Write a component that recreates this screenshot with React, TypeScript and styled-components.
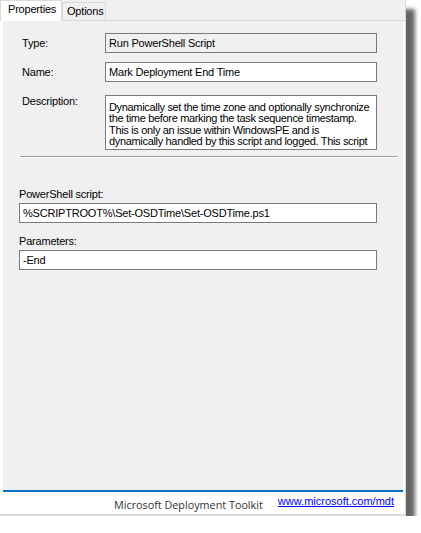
import React from "react";
import styled, { createGlobalStyle } from "styled-components";

const Global = createGlobalStyle`
  html, body { margin: 0; padding: 0; background: #ffffff; }
  body { font-family: "Liberation Sans", Arial, sans-serif; letter-spacing: -0.2px; }
`;

const Window = styled.div`
  width: 405px;
  height: 514px;
  display: flex;
  flex-direction: column;
  background: #f0f0f0;
  border-right: 1px solid #d6d6d6;
  border-bottom: 2px solid #d9d9d9;
  box-shadow: 9px 9px 4px rgba(0, 0, 0, 0.6);
  box-sizing: content-box;
`;

const TabBar = styled.div`
  height: 20px;
  display: flex;
  align-items: flex-end;
  background: #f0f0f0;
`;

const Tab = styled.div<{ $active?: boolean }>`
  box-sizing: border-box;
  height: ${(p) => (p.$active ? "21px" : "18px")};
  margin-bottom: ${(p) => (p.$active ? "-1px" : "0")};
  width: ${(p) => (p.$active ? "62px" : "44px")};
  padding-left: ${(p) => (p.$active ? "7px" : "4px")};
  padding-top: 2px;
  background: ${(p) => (p.$active ? "#ffffff" : "#f0f0f0")};
  border: 1px solid #d9d9d9;
  border-bottom: none;
  font-size: 11px;
  color: #000;
  position: relative;
  z-index: ${(p) => (p.$active ? 1 : 0)};
`;

const Body = styled.div`
  flex: 1;
  display: flex;
  flex-direction: column;
  background: #ffffff;
  padding: 0 2px 0 3px;
  border-top: 1px solid #d9d9d9;
`;

const Page = styled.div`
  flex: 1;
  background: #f0f0f0;
  padding: 12px 0 0 16px;
  display: flex;
  flex-direction: column;
`;

const Grid = styled.div`
  display: grid;
  grid-template-columns: 83px 272px;
  row-gap: 9px;
  padding-left: 3px;
`;

const Label = styled.div<{ $top?: boolean }>`
  font-size: 11px;
  color: #000;
  align-self: ${(p) => (p.$top ? "start" : "center")};
  padding-top: ${(p) => (p.$top ? "4px" : "0")};
`;

const Field = styled.div<{ $disabled?: boolean; $wide?: boolean }>`
  box-sizing: border-box;
  height: 20px;
  width: ${(p) => (p.$wide ? "358px" : "272px")};
  border: 1px solid #7a7a7a;
  background: ${(p) => (p.$disabled ? "#f0f0f0" : "#ffffff")};
  font-size: 11px;
  line-height: 18px;
  padding-left: 3px;
  color: #000;
  white-space: nowrap;
  overflow: hidden;
`;

const TextArea = styled.div`
  box-sizing: border-box;
  height: 55px;
  width: 272px;
  margin-top: 4px;
  border: 1px solid #7a7a7a;
  background: #ffffff;
  font-size: 11px;
  letter-spacing: -0.33px;
  line-height: 11.4px;
  padding: 6px 0 0 3px;
  color: #000;
  white-space: nowrap;
  overflow: hidden;
`;

const Separator = styled.div`
  height: 0;
  margin: 6px 5px 0 1px;
  border-top: 1px solid #a0a0a0;
  border-bottom: 1px solid #ffffff;
`;

const Section = styled.div`
  display: flex;
  flex-direction: column;
  margin-top: 30px;
`;

const SmallLabel = styled.div<{ $gap?: number }>`
  font-size: 11px;
  color: #000;
  margin-top: ${(p) => p.$gap ?? 0}px;
  margin-bottom: 3px;
`;

const Footer = styled.div`
  height: 22px;
  border-top: 2px solid #0072c6;
  background: #ffffff;
  display: flex;
  align-items: center;
  justify-content: flex-end;
  padding-right: 9px;
  gap: 15px;
`;

const Brand = styled.span`
  font-family: "Open Sans", "Noto Sans", sans-serif;
  font-size: 10.8px;
  letter-spacing: 0;
  color: #333333;
  padding-top: 2px;
`;

const Link = styled.a`
  font-family: "Liberation Sans", Arial, sans-serif;
  font-size: 11px;
  letter-spacing: 0;
  color: #0000ff;
  text-decoration: underline;
  margin-top: -4px;
`;

export default function App() {
  return (
    <>
      <Global />
      <Window>
        <TabBar>
          <Tab $active>Properties</Tab>
          <Tab>Options</Tab>
        </TabBar>
        <Body>
          <Page>
            <Grid>
              <Label>Type:</Label>
              <Field $disabled>Run PowerShell Script</Field>
              <Label>Name:</Label>
              <Field>Mark Deployment End Time</Field>
              <Label $top>Description:</Label>
              <TextArea>
                Dynamically set the time zone and optionally synchronize
                <br />
                the time before marking the task sequence timestamp.
                <br />
                This is only an issue within WindowsPE and is
                <br />
                dynamically handled by this script and logged. This script
              </TextArea>
            </Grid>
            <Separator />
            <Section>
              <SmallLabel>PowerShell script:</SmallLabel>
              <Field $wide>%SCRIPTROOT%\Set-OSDTime\Set-OSDTime.ps1</Field>
              <SmallLabel $gap={12}>Parameters:</SmallLabel>
              <Field $wide>-End</Field>
            </Section>
          </Page>
          <Footer>
            <Brand>Microsoft Deployment Toolkit</Brand>
            <Link href="#">www.microsoft.com/mdt</Link>
          </Footer>
        </Body>
      </Window>
    </>
  );
}
